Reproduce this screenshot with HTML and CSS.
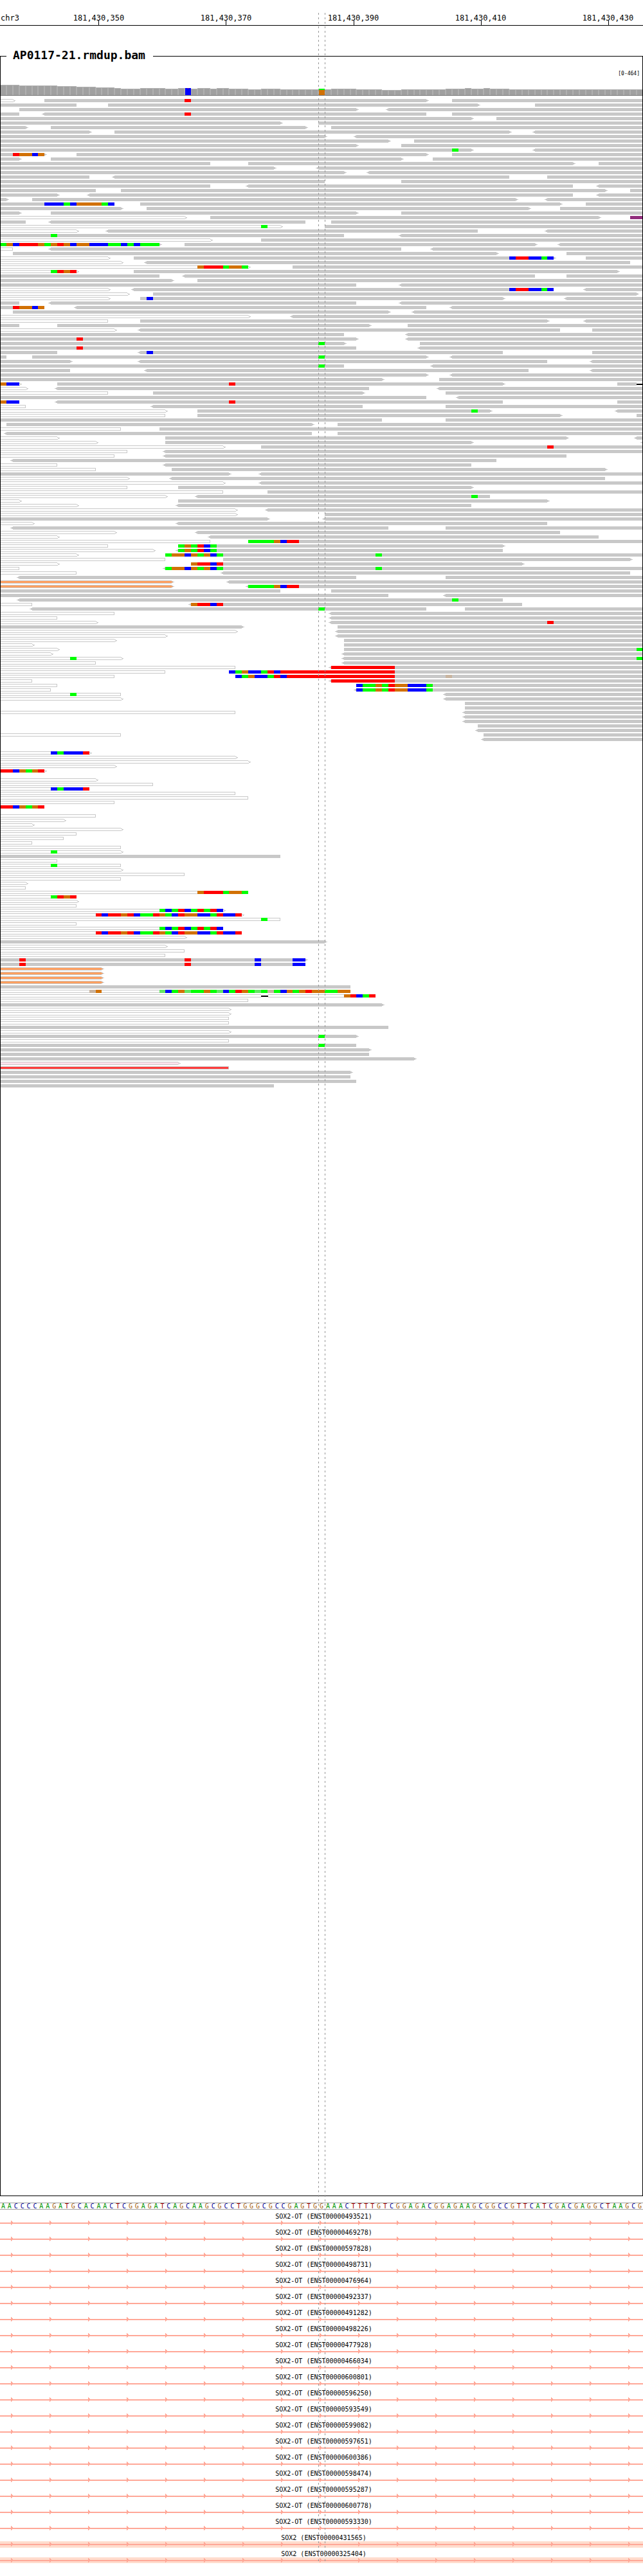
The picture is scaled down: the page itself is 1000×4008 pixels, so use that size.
FILE: index.html
```html
<!DOCTYPE html>
<html lang="en">
<head>
<meta charset="utf-8">
<meta name="viewport" content="width=device-width, initial-scale=1">
<title>chr3:181,430,335-181,430,435</title>
<link rel="stylesheet" href="styles.css">
</head>
<body>
<main class="browser">
  <div class="guide"></div>

  <ol class="ruler">
    <li class="chrom">chr3</li>
    <li class="mark mark-1">181,430,350</li>
    <li class="mark mark-2">181,430,370</li>
    <li class="mark mark-3">181,430,390</li>
    <li class="mark mark-4">181,430,410</li>
    <li class="mark mark-5">181,430,430</li>
  </ol>

  <fieldset class="sample">
    <legend>AP0117-21.rmdup.bam</legend>
    <p class="range">[0-464]</p>
    <svg class="coverage" id="coverage" role="img" aria-label="Coverage"></svg>
    <svg class="pileup" id="pileup" role="img" aria-label="Aligned reads"></svg>
  </fieldset>

  <div class="sequence" id="sequence"></div>

  <svg class="defs" aria-hidden="true">
    <defs>
      <pattern id="strand" width="60" height="10" patternUnits="userSpaceOnUse">
        <rect y="4" width="60" height="2" fill="#ffa898"/>
        <path d="M17 1h1v1h1v1h1v1h1v1h-1v1h-1v1h-1v1h-1z" fill="#ffa898"/>
      </pattern>
    </defs>
  </svg>

  <ul class="transcripts">
    <li><span>SOX2-OT (ENST00000493521)</span><svg><rect width="100%" height="10" fill="url(#strand)"/></svg></li>
    <li><span>SOX2-OT (ENST00000469278)</span><svg><rect width="100%" height="10" fill="url(#strand)"/></svg></li>
    <li><span>SOX2-OT (ENST00000597828)</span><svg><rect width="100%" height="10" fill="url(#strand)"/></svg></li>
    <li><span>SOX2-OT (ENST00000498731)</span><svg><rect width="100%" height="10" fill="url(#strand)"/></svg></li>
    <li><span>SOX2-OT (ENST00000476964)</span><svg><rect width="100%" height="10" fill="url(#strand)"/></svg></li>
    <li><span>SOX2-OT (ENST00000492337)</span><svg><rect width="100%" height="10" fill="url(#strand)"/></svg></li>
    <li><span>SOX2-OT (ENST00000491282)</span><svg><rect width="100%" height="10" fill="url(#strand)"/></svg></li>
    <li><span>SOX2-OT (ENST00000498226)</span><svg><rect width="100%" height="10" fill="url(#strand)"/></svg></li>
    <li><span>SOX2-OT (ENST00000477928)</span><svg><rect width="100%" height="10" fill="url(#strand)"/></svg></li>
    <li><span>SOX2-OT (ENST00000466034)</span><svg><rect width="100%" height="10" fill="url(#strand)"/></svg></li>
    <li><span>SOX2-OT (ENST00000600801)</span><svg><rect width="100%" height="10" fill="url(#strand)"/></svg></li>
    <li><span>SOX2-OT (ENST00000596250)</span><svg><rect width="100%" height="10" fill="url(#strand)"/></svg></li>
    <li><span>SOX2-OT (ENST00000593549)</span><svg><rect width="100%" height="10" fill="url(#strand)"/></svg></li>
    <li><span>SOX2-OT (ENST00000599082)</span><svg><rect width="100%" height="10" fill="url(#strand)"/></svg></li>
    <li><span>SOX2-OT (ENST00000597651)</span><svg><rect width="100%" height="10" fill="url(#strand)"/></svg></li>
    <li><span>SOX2-OT (ENST00000600386)</span><svg><rect width="100%" height="10" fill="url(#strand)"/></svg></li>
    <li><span>SOX2-OT (ENST00000598474)</span><svg><rect width="100%" height="10" fill="url(#strand)"/></svg></li>
    <li><span>SOX2-OT (ENST00000595287)</span><svg><rect width="100%" height="10" fill="url(#strand)"/></svg></li>
    <li><span>SOX2-OT (ENST00000600778)</span><svg><rect width="100%" height="10" fill="url(#strand)"/></svg></li>
    <li><span>SOX2-OT (ENST00000593330)</span><svg><rect width="100%" height="10" fill="url(#strand)"/></svg></li>
    <li class="exon"><span>SOX2 (ENST00000431565)</span><svg><rect width="100%" height="10" fill="url(#strand)"/></svg></li>
    <li class="exon"><span>SOX2 (ENST00000325404)</span><svg><rect width="100%" height="10" fill="url(#strand)"/></svg></li>
  </ul>
</main>
<script src="script.js"></script>
</body>
</html>
```
FILE: styles.css
```css
body {
  margin: 0;
  background: #fff;
  color: #000;
  font-family: "DejaVu Sans Mono", "Liberation Mono", monospace;
}

.browser {
  position: relative;
  padding-bottom: 20px;
}

/* Dashed lines on both sides of the centre base */
.guide {
  position: absolute;
  z-index: 1;
  top: 20px;
  bottom: 23px;
  left: 49.5%;
  width: calc(1% + 1px);
  box-sizing: border-box;
  pointer-events: none;
  background:
    repeating-linear-gradient(#969696 0 3px, transparent 3px 7px) left / 1px 100% no-repeat,
    repeating-linear-gradient(#969696 0 3px, transparent 3px 7px) right / 1px 100% no-repeat;
}

.ruler {
  display: grid;
  grid-template-columns: repeat(101, minmax(0, 1fr));
  height: 18px;
  margin: 0;
  padding: 21px 0 0;
  border-bottom: 1px solid #000;
  list-style: none;
  font-size: 12px;
  line-height: 14px;
  white-space: nowrap;
}

.chrom {
  grid-column: 1 / span 5;
  padding-left: 1px;
}

.mark {
  position: relative;
  display: flex;
  justify-content: center;
  grid-row: 1;
}

.mark::after {
  content: "";
  position: absolute;
  bottom: 0;
  left: 50%;
  width: 1px;
  height: 7px;
  background: #000;
}

.mark-1 { grid-column: 16; }
.mark-2 { grid-column: 36; }
.mark-3 { grid-column: 56; }
.mark-4 { grid-column: 76; }
.mark-5 { grid-column: 96; }

.sample {
  min-width: 0;
  margin: 36px 0 0;
  padding: 0;
  border: 1px solid #000;
}

.sample legend {
  margin-left: 9px;
  padding: 0 12px 2px 10px;
  font-size: 18px;
  font-weight: bold;
  line-height: 20px;
}

.range {
  margin: 0;
  padding: 12px 4px 0 0;
  font-size: 8px;
  line-height: 10px;
  text-align: right;
}

.coverage,
.pileup {
  display: block;
  width: 100%;
  overflow: hidden;
  shape-rendering: crispEdges;
}

.coverage {
  height: 29px;
  margin-bottom: 5px;
}

.sequence {
  display: grid;
  grid-template-columns: repeat(101, minmax(0, 1fr));
  height: 9px;
  margin: 10px 0 1px;
  border: solid #a0a0a0;
  border-width: 1px 0;
  font-size: 10px;
  line-height: 9px;
  text-align: center;
}

.base-A { color: #009600; }
.base-C { color: #000096; }
.base-G { color: #a86414; }
.base-T { color: #a00000; }

.defs {
  position: absolute;
  width: 0;
  height: 0;
}

.transcripts {
  margin: 0;
  padding: 0;
  list-style: none;
  font-size: 10px;
  line-height: 11px;
  text-align: center;
}

.transcripts span {
  display: block;
  padding: 4px 0 0 7px;
}

.transcripts svg {
  display: block;
  width: 100%;
  height: 10px;
  shape-rendering: crispEdges;
}

.transcripts .exon svg {
  background: #ffdccd;
}

.transcripts .exon:last-child svg {
  height: 9px;
}
```
FILE: script.js
```js
const BASES = 101;
const ROW_PITCH = 7;
const MAX_ROWS = 466;
const READ = '#c8c8c8';

const BASE_COLORS = {
  A: '#00ff00', C: '#0000ff', G: '#d17105', T: '#ff0000',
  a: '#64e664', g: '#c8b4a0'
};

// Read fills: o = low mapping quality, h/k/r/p = unusual mate
const READ_FILLS = { o: '#ffffff', h: '#ffa060', k: '#ffe0ec', r: '#ff3c3c' };

const SEQUENCE =
  'AACCCCAAGATGCACAACTCGGAGATCAGCAAGCGCCTGGGCGCCGAGTG' +
  'GAAACTTTTGTCGGAGACGGAGAAGCGGCCGTTCATCGACGAGGCTAAGCG';

// [first base, top of the bar above the baseline]
const COVERAGE = [
  [0, 16], [3, 15], [9, 14], [12, 13], [15, 12], [18, 11], [19, 10], [22, 11],
  [26, 10], [28, 11], [30, 10], [31, 11], [33, 10], [34, 11], [36, 10], [39, 9],
  [41, 10], [44, 9], [50, 10], [51, 9], [52, 10], [56, 9], [60, 8], [63, 9],
  [70, 10], [73, 11], [74, 10], [76, 11], [77, 10], [80, 9]
];

const T = n => 'T'.repeat(n);

// One string per row. "<a-b>" is a read with its strand arrows, "12ACG" are
// mismatches from base 12 on, "41-" is a deleted base.
const ROWS = [
  'o0-2> 7-67> 71-101 29T', '0-12 17-75> 84-101', '3-56> <61-101', '0-3 <7-67 71-101 29T',
  '0-74> 78-101', '0-44> 50-101', '0-4> 8-48> 52-101', '0-14> 18-80> <84-101',
  '0-51> <56-101', '0-61> 65-101', '0-56> 63-101', '0-74> <84-101 71A',
  '0-7> 12-67> 71-101 2TGGCG', '0-3> 8-63> 68-101', '0-33 39-90> 94-101', '0-43> <50-101',
  '0-54> <58-101', '0-14 <18-80 86-101', '0-51 63-101', '0-33 <39-90 <94-101',
  '0-15 19-95> 99-101', '0-9> <14-90 <94-101', '0-1> 5-81> <86-101',
  '0-18 22-88> 92-101 7CCCACGGGGAC', '0-19> 23-83> 88-101', '0-3> 8-56> 63-101',
  'o0-29> 33-94> p99-101', '0-4 <8-48 52-101', 'o0-44> 51-101 41A', 'o0-12> <17-75 <86-101',
  '0-54 <63-101 8A', 'o0-33> 41-101', '0-25> 29-84> <88-101 0AGCTTTGAGTGCGGCCCAACACAAA',
  'o0-2 <8-63 <68-101', '2-78> 89-101', 'o0-17> 21-87> 92-101 80CTTCCAC', 'o0-19> <23-99',
  'o0-39> 46-101 31GTTTAGGA', 'o0-12> 21-97> 8ATGT', '0-25 <29-84 89-101', '0-27> 31-101',
  '0-56 <63-101', 'o0-17> <21-87 <92-101 80CTTCCAC', 'o0-20> 24-100>',
  'o0-17> 22-79> <89-101 23C', '0-3 <8-56 <63-101', '0-7 <12-67 <71-101 2TGGCG',
  '2-61> <65-101', 'o0-39> <46-101', 'o0-17 22-86> <92-101', '0-3 9-58> 64-101',
  'o0-18> <22-88 93-101', '0-54 <64-101', '0-56> <64-101 12T', '0-54> 66-101 50A',
  '0-56 <66-101 12T', '0-9 <22-79 93-101 23C', '0-1 5-67> <71-101 50A',
  '0-11> <22-86 <93-101', '0-54 <68-101 50A', '0-11 <23-83 <93-101', '0-67> <71-101',
  '0-60> 69-101', 'o0-3> 9-79> 97-100 100- 0GCC 36T', 'o0-4> <9-58 <69-101',
  'o0-17 24-57> 70-101', '0-67 <72-101', 'o0-3 <9-79 97-101 0GCC 36T',
  'o0-4 <24-57 70-101', 'o0-26> 31-77> <97-101 74A', 'o0-26 31-88> 100-101', '0-60 70-101',
  '1-49> 53-101', 'o0-19 25-101', '<1-49 53-101', 'o0-9> 26-89> <100-101',
  'o0-15> 26-74> <101-101', 'o0-35> 41-101 86T', 'o0-20 <26-101', 'o0-18 <26-89', '<2-78',
  'o0-9 <26-74', 'o0-15 27-95>', '0-36> <41-101', 'o0-20> <27-95', 'o0-35> <41-101',
  'o0-20 28-74>', 'o0-35 42-101', 'o0-26> <31-77 74A', 'o0-3> 28-86>', 'o0-12> <28-74',
  'o0-37> <42-101', 'o0-37> 51-101', '0-42> <51-101', 'o0-5> <28-86', '<2-61 70-101',
  'o0-18> <31-88', 'o0-9> <33-94', 'o0-33 39-101 39AAAAGCTT', 'o0-17 28-79> 28AGATCA',
  'o0-24> <28-79 28AGATCA', 'o0-12> 26-101 26AGGCGAGCA 59A', 'o0-26 35-99>',
  'o0-9> 30-82> 30GTTCT', 'o0-3 <26-101 26AGGCGAGCA 59A', 'o0-12 <35-99', '<3-56 70-101',
  'h0-27> <36-101', 'h0-27> <39-101 39AAAAGCTT', '0-44 52-101', '0-61 <70-101', '<3-79 71A',
  'o0-5 <30-82 30GTTCT', '<5-67 73-101 50A', 'o0-18 <52-101', 'o0-9 <52-101',
  'o0-15> <52-101 86T', '0-38> 53-101', 'o0-37> <53-101', 'o0-26> <53-101', 'o0-18> 54-101',
  'o0-5> 54-101', 'o0-9> 54-101 100A', 'o0-8> <54-101', 'o0-19> <54-101 11A 100A',
  'o0-15 <54-101', 'o0-37 <52-101 52' + T(10), 'o0-26 36-101 36CAGCCATC' + T(18),
  'o0-18 37-101 37CAGCCATC' + T(17) + ' 70g', 'o0-5 <52-101 52' + T(10),
  'o0-9 56-101 56CAAGATGGCCCA', 'o0-8 <56-101 56CAAGATGGCCCA', 'o0-19 <70-101 11A',
  'o0-19> <70-101', '73-101', '73-101', 'o0-37 <73-101', '<73-101', '<73-101', '75-101',
  '<75-101', 'o0-19 76-101', '<76-101', '', '', 'o0-14> 8CACCCT', 'o0-37>', 'o0-39>',
  'o0-18>', 'o0-7> 0TTCGAGT', '', 'o0-15>', 'o0-24', 'o0-14 8CACCCT', 'o0-37', 'o0-39',
  'o0-18', 'o0-7 0TTCGAGT', '', 'o0-15', 'o0-10>', 'o0-5>', 'o0-19>', 'o0-12', 'o0-10',
  'o0-5', 'o0-19', 'o0-19> 8A', '0-44', 'o0-9', 'o0-19 8A', 'o0-19>', 'o0-29', 'o0-19',
  'o0-4>', 'o0-4', 'o0-39 31GTTTAGGA', 'o0-12 8ATGT', 'o0-12>', 'o0-12',
  'o0-35> 25ACATCATATC', 'o0-38> 15TCTTGTCAATGACTGGCCATCCT', 'o0-44 41A', 'o0-12',
  'o0-35 25ACATCATATC', 'o0-38 15TCTTGTCAATGACTGGCCATCCT', 'o0-29>', '0-51>', 'o0-26>',
  'o0-29', 'o0-26', '0-48> 3T 29T 40C 46CC', '0-48 3T 29T 40C 46CC', 'h0-16>', 'h0-16>',
  'h0-16>', 'h0-16>', '0-55', 'o0-55 14gG 25aCAGaAAGAaCATGAaAgACGAGTGGAAGG',
  'o0-59 41- 54GTCAT', 'o0-39', '0-60>', 'o0-36>', 'o0-36>', 'o0-36', 'o0-36', '0-61',
  'o0-36>', '0-56> 50A', 'o0-36', '0-56 50A', '0-58>', '0-58', '0-65>', 'k0-28>', 'r0-36',
  '0-55>', '0-55', '0-56', '0-43'
];

const rect = (x, y, w, h, fill) =>
  `<rect x="${x}" y="${y}" width="${Math.max(w, 0)}" height="${h}" fill="${fill}"/>`;

// Left edge of a base, in pixels inside a framed track
function scale() {
  const width = document.querySelector('.browser').clientWidth;
  return base => Math.round(base * width / BASES) - 1;
}

function drawRead(kind, reverse, x0, x1, y, forward) {
  const fill = READ_FILLS[kind];
  const solid = kind === 'p' ? '#922d7d' : READ;
  let out = rect(x0, y, x1 - x0, 5, solid);
  if (fill) {
    out += rect(x0 + 1, y + 1, x1 - x0 - (forward ? 1 : 2), 3, fill);
  }
  if (reverse) {
    out += rect(x0 - 2, y + 1, 2, 3, solid) + rect(x0 - 4, y + 2, 2, 1, solid);
  }
  if (forward && kind === 'o') {
    out += rect(x1, y + 1, 2, 1, READ) + rect(x1 + 2, y + 2, 2, 1, READ) +
      rect(x1 + 1, y + 3, 2, 1, READ) + rect(x1, y + 4, 1, 1, READ);
  } else if (forward) {
    out += rect(x1, y + 1, 2, 3, solid) + rect(x1 + 2, y + 2, 2, 1, solid);
    if (fill) out += rect(x1, y + 2, 2, 1, fill);
  }
  return out;
}

function drawPileup(svg) {
  const px = scale();
  let out = '';
  ROWS.forEach((row, index) => {
    const y = index * ROW_PITCH;
    for (const token of row.split(' ')) {
      const read = token.match(/^([ohkrp]?)(<?)(\d+)-(\d+)(>?)$/);
      const gap = token.match(/^(\d+)-$/);
      const bases = token.match(/^(\d+)([ACGTag]+)$/);
      if (read) {
        out += drawRead(read[1], read[2], px(+read[3]), px(+read[4]), y, read[5]);
      } else if (gap) {
        const x = px(+gap[1]);
        const w = px(+gap[1] + 1) - x + 1;
        out += rect(x, y, w, 5, '#ffffff') + rect(x, y + 2, w, 2, '#000000');
      } else if (bases) {
        [...bases[2]].forEach((letter, i) => {
          const x = px(+bases[1] + i);
          out += rect(x, y, px(+bases[1] + i + 1) - x, 5, BASE_COLORS[letter]);
        });
      }
    }
  });
  svg.style.height = MAX_ROWS * ROW_PITCH + 'px';
  svg.innerHTML = out;
}

function drawCoverage(svg) {
  const px = scale();
  const floor = 28;
  let out = '';
  COVERAGE.forEach(([first, height], i) => {
    const end = i + 1 < COVERAGE.length ? COVERAGE[i + 1][0] : BASES;
    for (let base = first; base < end; base++) {
      const x = px(base);
      const w = px(base + 1) - x;
      out += rect(x, floor - height, w, height, '#b0b0b0');
      out += rect(x + 1, floor - height + 1, w - 2, height - 1, '#a0a0a0');
    }
  });
  out += rect(px(0), floor, px(BASES) + 1, 1, '#787878');
  out += rect(px(29) + 1, floor - 11, 9, 11, BASE_COLORS.C);
  out += rect(px(29) + 5, floor - 11, 1, 1, BASE_COLORS.T);
  out += rect(px(50) + 1, floor - 8, 9, 8, BASE_COLORS.G);
  out += rect(px(50) + 1, floor - 10, 9, 2, BASE_COLORS.A);
  svg.innerHTML = out;
}

function draw() {
  drawCoverage(document.getElementById('coverage'));
  drawPileup(document.getElementById('pileup'));
}

document.getElementById('sequence').innerHTML =
  [...SEQUENCE].map(base => `<span class="base-${base}">${base}</span>`).join('');

draw();
window.addEventListener('resize', draw);
```
